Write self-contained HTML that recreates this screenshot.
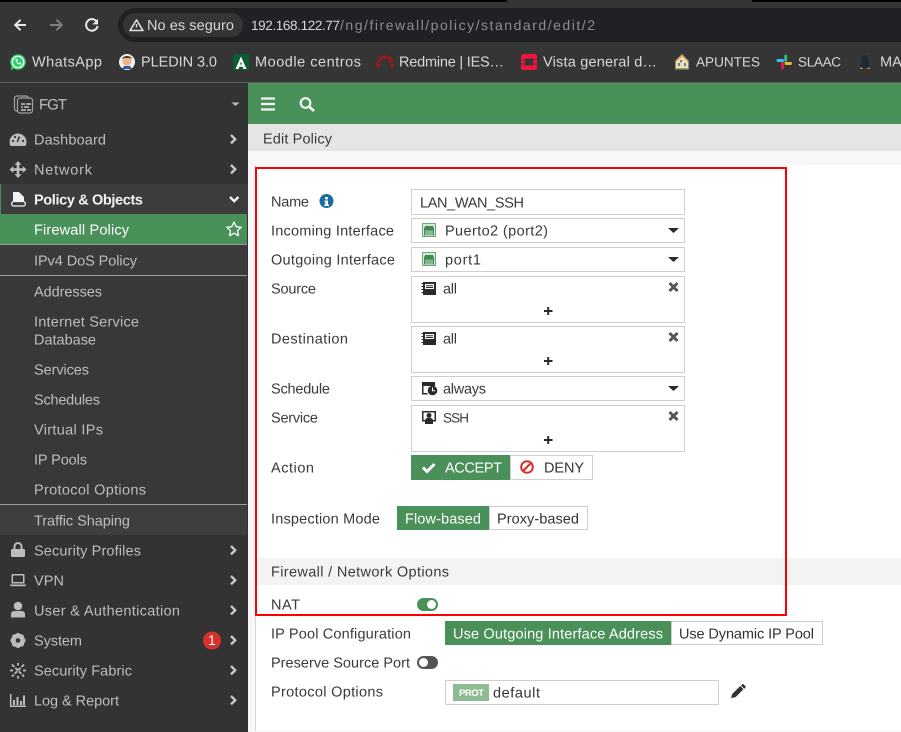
<!DOCTYPE html>
<html lang="es"><head><meta charset="utf-8"><title>Edit Policy</title>
<style>
html,body{margin:0;padding:0;background:#f5f5f5;width:901px;height:732px;overflow:hidden}
svg{display:block;position:absolute;left:0;top:0}
text{font-family:"Liberation Sans",sans-serif;font-size:14.5px;fill:#333;text-rendering:geometricPrecision;transform:translateY(-.7px)}
.c text{fill:#d8d8d8}
.n text{fill:#bdbdbd}
.l text{fill:#3a3a3a}
.b{fill:#fff;stroke:#cfcfcf;stroke-width:1}
</style></head><body>
<svg width="901" height="732" viewBox="0 0 901 732" xmlns="http://www.w3.org/2000/svg">
<!-- browser chrome -->
<rect width="901" height="83" fill="#353535"/>
<rect width="507" height="2" fill="#000"/><rect x="752" width="149" height="2" fill="#000"/>
<rect y="82" width="901" height="1" fill="#5c5c5c"/>
<rect x="118" y="8" width="800" height="34" rx="17" fill="#202124"/>
<rect x="123" y="13" width="120" height="24" rx="12" fill="#353535"/>
<g fill="none" stroke-width="2">
<path d="M26 25H15.5M20.5 19.8L15.2 25l5.3 5.2" stroke="#e8e8e8"/>
<path d="M50 25h11M56.500 19.800L61.800 25l-5.300 5.200" stroke="#7f7f7f"/>
<path d="M96.600 21.500A5.800 5.800 0 1 0 97.600 26" stroke="#e8e8e8"/>
<path d="M136.500 20L143 30.500H130Z" stroke="#e0e0e0" stroke-width="1.600" stroke-linejoin="round"/>
</g>
<path d="M98 18.800v5.600h-5.600z" fill="#e8e8e8"/>
<rect x="135.800" y="24" width="1.400" height="3.400" fill="#e0e0e0"/>
<g class="c">
<text x="147" y="30.700" textLength="87">No es seguro</text>
<text x="251" y="30.700" textLength="89" style="font-size:13.500px">192.168.122.77</text>
<text x="340" y="30.700" textLength="255" style="fill:#8e8e8e;font-size:14px">/ng/firewall/policy/standard/edit/2</text>
<text x="32" y="67" textLength="70">WhatsApp</text>
<text x="141" y="67" textLength="76">PLEDIN 3.0</text>
<text x="255" y="67" textLength="106">Moodle centros</text>
<text x="399" y="67" textLength="105">Redmine | IES…</text>
<text x="543" y="67" textLength="114">Vista general d…</text>
<text x="696" y="67" textLength="64" style="font-size:13.500px">APUNTES</text>
<text x="798" y="67" textLength="43" style="font-size:13.500px">SLAAC</text>
<text x="880" y="67">MA</text>
</g>
<!-- bookmark icons -->
<circle cx="18" cy="62" r="7.800" fill="#25d366"/><path d="M10.500 70l1.400-5 3.400 3.300z" fill="#25d366"/>
<circle cx="18" cy="62" r="5.700" fill="none" stroke="#fff" stroke-width="1.400"/><path d="M15.600 59.300c0 3 2 5.200 5 5.500l.7-1.700-1.700-.8-.8.800c-.8-.4-1.400-1-1.800-1.900l.8-.8-.7-1.800z" fill="#fff"/>
<circle cx="127" cy="62" r="8" fill="#f1f1f1"/><circle cx="127" cy="61" r="4.600" fill="#e9b48e"/><path d="M122 59c1-4 9-4 10 0l-2-1h-6z" fill="#5a3b26"/><path d="M122 69l2-3h6l2 3z" fill="#3559a5"/>
<rect x="233" y="54" width="16" height="16" fill="#0b5c33"/><path d="M241 56.500L235.500 69h3l.8-2.200h3.400l.8 2.200h3zM241 61.500l1 3h-2z" fill="#fff" fill-rule="evenodd"/>
<g fill="#b51010"><circle cx="378" cy="65.500" r="1.700"/><circle cx="379" cy="61" r="1.700"/><circle cx="381.500" cy="58" r="1.700"/><circle cx="385.200" cy="57" r="1.700"/><circle cx="389" cy="58" r="1.700"/><circle cx="391.400" cy="61" r="1.700"/><circle cx="392.400" cy="65.500" r="1.700"/></g>
<path d="M521 56.500q0-2.500 2.500-2.500h11q2.500 0 2.500 2.500v11q0 2.500-2.500 2.500h-11q-2.500 0-2.500-2.500zM525 58.500v7h8v-7z" fill="#f0163f" fill-rule="evenodd"/><path d="M521 60h4M533 60h4M521 64h4M533 64h4" stroke="#353535" stroke-width=".8"/>
<path d="M682 55l6.500 6.500V69h-13v-7.500z" fill="#f3dfae"/><path d="M682 54l7 7-1 1-6-5.500-6 5.500-1-1z" fill="#c9a76c"/><rect x="675" y="68" width="14" height="1.500" fill="#8aa86b"/><rect x="680" y="60" width="2" height="2.500" fill="#5b84b5"/><rect x="684" y="63" width="2" height="3" fill="#5b84b5"/><rect x="678" y="63" width="2" height="3" fill="#5b84b5"/>
<g stroke-width="3" stroke-linecap="round"><path d="M778 60.500h4.500" stroke="#36c5f0"/><path d="M785.700 56v4.500" stroke="#2eb67d"/><path d="M790.500 63.500H786" stroke="#ecb22e"/><path d="M782.500 68v-4.500" stroke="#e01e5a"/></g>
<path d="M865 55c-3 0-3.500 3-3.500 5 0 3-1.500 4-1.500 6l2 2h6l2-2c0-2-1.500-3-1.500-6 0-2-.5-5-3.500-5z" fill="#1c2a36"/><path d="M861 67l2 2h-3zM869 67l-2 2h3z" fill="#d8982c"/>

<!-- sidebar -->
<rect y="83" width="248" height="649" fill="#333"/>
<rect y="184" width="248" height="30" fill="#3c3c3c"/><rect y="184" width="1" height="30" fill="#4a9059"/>
<rect y="214" width="247" height="30" fill="#4a9059"/>
<rect y="244" width="247" height="1" fill="#9a9a9a"/>
<rect y="245" width="247" height="30" fill="#3a3a3a"/>
<rect y="275" width="247" height="1" fill="#9a9a9a"/>
<rect y="276" width="247" height="228" fill="#383838"/>
<rect y="504" width="247" height="1" fill="#9a9a9a"/>
<rect y="505" width="247" height="30" fill="#3e3e3e"/>
<g class="n">
<text x="39" y="110" textLength="28" style="font-size:15px">FGT</text>
<text x="34" y="145" textLength="72">Dashboard</text>
<text x="34" y="175" textLength="58">Network</text>
<text x="34" y="205" textLength="109" style="fill:#f2f2f2;font-weight:700">Policy &amp; Objects</text>
<text x="34" y="235" textLength="95" style="fill:#fff">Firewall Policy</text>
<text x="34" y="266" textLength="103">IPv4 DoS Policy</text>
<text x="34" y="297" textLength="68">Addresses</text>
<text x="34" y="327" textLength="105">Internet Service</text>
<text x="34" y="345" textLength="62">Database</text>
<text x="34" y="375" textLength="55">Services</text>
<text x="34" y="405" textLength="66">Schedules</text>
<text x="34" y="435" textLength="69">Virtual IPs</text>
<text x="34" y="465" textLength="53">IP Pools</text>
<text x="34" y="495" textLength="112">Protocol Options</text>
<text x="34" y="526" textLength="96">Traffic Shaping</text>
<text x="34" y="556" textLength="107">Security Profiles</text>
<text x="34" y="586" textLength="30">VPN</text>
<text x="34" y="616" textLength="146">User &amp; Authentication</text>
<text x="34" y="646" textLength="48">System</text>
<text x="34" y="676" textLength="98">Security Fabric</text>
<text x="34" y="706" textLength="85">Log &amp; Report</text>
</g>
<!-- FGT icon -->
<g fill="none" stroke="#a0a0a0" stroke-width="1.200"><rect x="14.500" y="96" width="14" height="15" rx="2.500"/><rect x="17.500" y="98" width="15" height="15" rx="2.500" fill="#333"/></g>
<path d="M21 103h4v2h-4zM26 103h5v2h-5zM21 106h2v2h-2zM24 106h5v2h-5zM21 109h5v2h-5zM27 109h4v2h-4z" fill="#a0a0a0"/>
<path d="M231.500 102.500h8l-4 3.500z" fill="#bbb"/>
<!-- chevrons -->
<g fill="none" stroke="#c8c8c8" stroke-width="2.400">
<path d="M231 135l4.200 4.200-4.200 4.200M231 165l4.200 4.200-4.200 4.200M231 546l4.200 4.200-4.200 4.200M231 576l4.200 4.200-4.200 4.200M231 606l4.200 4.200-4.200 4.200M231 636l4.200 4.200-4.200 4.200M231 666l4.200 4.200-4.200 4.200M231 696l4.200 4.200-4.200 4.200"/>
<path d="M230 197l4.200 4.200 4.200-4.200" stroke="#f2f2f2"/>
</g>
<!-- sidebar icons -->
<path d="M10.500 146a8.500 8.500 0 1 1 15 0z" fill="#bdbdbd"/><path d="M17.300 142l2-5.500" stroke="#333" stroke-width="1.500"/><circle cx="13" cy="141" r="1.100" fill="#333"/><circle cx="15" cy="137" r="1.100" fill="#333"/><circle cx="23" cy="141" r="1.100" fill="#333"/>
<path d="M18 163v13M11.500 169.500h13" stroke="#bdbdbd" stroke-width="2.600"/><path d="M18 161l3.500 3.800h-7zM18 178l3.500-3.800h-7zM9.500 169.500l3.800-3.500v7zM26.500 169.500l-3.800-3.500v7z" fill="#bdbdbd"/>
<path d="M13 192h6l5 5v5H13z" fill="#f2f2f2"/><rect x="11.700" y="201.500" width="13.600" height="4.500" rx="2" fill="#3c3c3c" stroke="#f2f2f2" stroke-width="1.300"/>
<path d="M234 222l2.200 4.700 5 .6-3.700 3.400 1 5-4.500-2.500-4.500 2.500 1-5-3.700-3.400 5-.6z" fill="none" stroke="#fff" stroke-width="1.300" stroke-linejoin="round"/>
<path d="M13.500 549v-2.500a4.500 4.500 0 0 1 9 0v2.500h1.500q1 0 1 1v5.500q0 1.500-1.500 1.500h-11q-1.500 0-1.500-1.500V550q0-1 1-1zM15.500 549h5v-2.500a2.500 2.500 0 0 0-5 0z" fill="#bdbdbd" fill-rule="evenodd"/>
<path d="M12.500 574h11q1 0 1 1v8.500h-13V575q0-1 1-1zM13 575.500v6.500h10v-6.500zM10 584.500h16q0 1.800-2 1.800H12q-2 0-2-1.800z" fill="#bdbdbd" fill-rule="evenodd"/>
<circle cx="18" cy="606" r="4.300" fill="#bdbdbd"/><path d="M11 617.500v-3q0-3.500 3.500-3.500h7q3.500 0 3.500 3.500v3z" fill="#bdbdbd"/>
<circle cx="18" cy="640.500" r="5.200" fill="none" stroke="#bdbdbd" stroke-width="3.500"/><path d="M18 633v15M10.500 640.500h15M12.700 635.200l10.600 10.600M23.300 635.200l-10.600 10.600" stroke="#bdbdbd" stroke-width="2.400"/><circle cx="18" cy="640.500" r="2.300" fill="#333"/>
<path d="M12 664.500l12 12M24 664.500l-12 12M18 663v2.500M18 676v2.500M10 670.500h3M23 670.500h3" stroke="#bdbdbd" stroke-width="1.800" stroke-dasharray="3.500 1.300" fill="none"/>
<path d="M10.700 694v12.300H26" fill="none" stroke="#bdbdbd" stroke-width="1.500"/><path d="M13 700h2v5h-2zM16.500 697h2v8h-2zM20 701h2v4h-2zM23 695.500h2v9.500h-2z" fill="#bdbdbd"/>
<circle cx="212" cy="640.500" r="9" fill="#d8302a"/><text x="208" y="645.700" style="fill:#fff;font-size:14px">1</text>

<!-- header -->
<rect x="248" y="83" width="653" height="41" fill="#4a9059"/>
<rect x="248" y="124" width="653" height="27" fill="#e5e5e5"/>
<rect x="248" y="151" width="653" height="581" fill="#f7f7f7"/>
<path d="M261 98.500h14M261 104h14M261 109.500h14" stroke="#f4f4f4" stroke-width="2.300"/>
<circle cx="305.500" cy="103" r="4.800" fill="none" stroke="#f4f4f4" stroke-width="2.200"/><path d="M309 106.500l5 4.500" stroke="#f4f4f4" stroke-width="2.800"/>
<text x="263" y="144" textLength="69" style="fill:#3a3a3a">Edit Policy</text>

<!-- panel -->
<rect x="255" y="165" width="646" height="566" fill="#fff"/>
<rect x="255" y="165" width="1" height="566" fill="#d8d8d8"/>
<rect x="256" y="558" width="645" height="27" fill="#f3f3f3"/>
<g class="l">
<text x="271" y="207" textLength="38">Name</text>
<text x="271" y="236" textLength="123">Incoming Interface</text>
<text x="271" y="265" textLength="124">Outgoing Interface</text>
<text x="271" y="294" textLength="45">Source</text>
<text x="271" y="344" textLength="77">Destination</text>
<text x="271" y="394" textLength="59">Schedule</text>
<text x="271" y="423" textLength="47">Service</text>
<text x="271" y="473" textLength="43">Action</text>
<text x="271" y="524" textLength="109">Inspection Mode</text>
<text x="271" y="577" textLength="178">Firewall / Network Options</text>
<text x="271" y="610" textLength="29">NAT</text>
<text x="271" y="639" textLength="140">IP Pool Configuration</text>
<text x="271" y="668" textLength="139">Preserve Source Port</text>
<text x="271" y="697" textLength="112">Protocol Options</text>
</g>
<circle cx="326.500" cy="201" r="7" fill="#1a6ea0"/><path d="M325 197h3v2.400h-3zM324.500 200.500h3.500v4h1v1.500h-4.700v-1.500h1v-2.500h-.8z" fill="#fff"/>
<!-- fields -->
<rect class="b" x="411.500" y="189.500" width="273" height="25"/>
<rect class="b" x="411.500" y="218.500" width="273" height="24"/>
<rect class="b" x="411.500" y="247.500" width="273" height="24"/>
<rect class="b" x="411.500" y="276.500" width="273" height="46"/>
<rect class="b" x="411.500" y="326.500" width="273" height="46"/>
<rect class="b" x="411.500" y="376.500" width="273" height="24"/>
<rect class="b" x="411.500" y="405.500" width="273" height="46"/>
<g class="l">
<text x="420" y="208" textLength="104">LAN_WAN_SSH</text>
<text x="445" y="236" textLength="103">Puerto2 (port2)</text>
<text x="445" y="265" textLength="36">port1</text>
<text x="443" y="294" textLength="14">all</text>
<text x="443" y="344" textLength="14">all</text>
<text x="443" y="394" textLength="43">always</text>
<text x="443" y="423" textLength="26" style="font-size:13.500px">SSH</text>
</g>
<!-- port icons -->
<g>
<rect x="422.500" y="223.500" width="13" height="13" fill="#d5e7d8" stroke="#6ea97c"/><path d="M425 226h8v1.500h1v8h-10v-8h1z" fill="#3f8a50"/><path d="M426 230.500v5M428 230.500v5M430 230.500v5M432 230.500v5" stroke="#e2efe4" stroke-width=".9"/>
<rect x="422.500" y="252.500" width="13" height="13" fill="#d5e7d8" stroke="#6ea97c"/><path d="M425 255h8v1.500h1v8h-10v-8h1z" fill="#3f8a50"/><path d="M426 259.500v5M428 259.500v5M430 259.500v5M432 259.500v5" stroke="#e2efe4" stroke-width=".9"/>
</g>
<!-- address book icons -->
<g fill="#2a2a2a">
<path d="M423 282h13v13h-13zM425 284v5h9v-5z" fill-rule="evenodd"/><path d="M426 285.200h7v1h-7zM426 287h7v1h-7z"/><path d="M421.500 283h2v1h-2zM421.500 286h2v1h-2zM421.500 289h2v1h-2zM421.500 292h2v1h-2z"/>
<path d="M423 332h13v13h-13zM425 334v5h9v-5z" fill-rule="evenodd"/><path d="M426 335.200h7v1h-7zM426 337h7v1h-7z"/><path d="M421.500 333h2v1h-2zM421.500 336h2v1h-2zM421.500 339h2v1h-2zM421.500 342h2v1h-2z"/>
</g>
<!-- schedule -->
<path d="M422 382h13v4h-11.500v7h4v1.500H422z" fill="#2a2a2a"/><circle cx="432.500" cy="390.500" r="4.800" fill="#2a2a2a"/><path d="M432.500 387.500v3.200h2.500" stroke="#fff" fill="none"/>
<!-- service -->
<path d="M422 411h14v10.500h-14zM423.500 412.500v7.500h11v-7.500z" fill="#2a2a2a" fill-rule="evenodd"/><circle cx="429" cy="415.500" r="2.500" fill="#2a2a2a"/><path d="M425 424v-3q0-3 2.500-3h3q2.500 0 2.500 3v3z" fill="#2a2a2a"/>
<!-- carets -->
<path d="M668 228h11l-5.500 5zM668 257h11l-5.500 5zM668 386h11l-5.500 5zM701 688h12l-6 5z" fill="#2a2a2a"/>
<!-- x + -->
<path d="M669.500 283l8 8M677.500 283l-8 8M669.500 333l8 8M677.500 333l-8 8M669.500 412l8 8M677.500 412l-8 8" stroke="#555" stroke-width="3"/>
<path d="M544 311h8.500M548.200 307v8M544 361h8.500M548.200 357v8M544 440h8.500M548.200 436v8" stroke="#2a2a2a" stroke-width="2"/>
<!-- action -->
<rect x="411" y="455" width="99" height="25" fill="#4a9059"/>
<rect class="b" x="510.500" y="455.500" width="82" height="24"/>
<path d="M423 467.500l4 4 7.500-7.500" fill="none" stroke="#fff" stroke-width="3"/>
<text x="445" y="473" textLength="57" style="fill:#fff">ACCEPT</text>
<circle cx="527" cy="467" r="5.800" fill="none" stroke="#d8302a" stroke-width="2"/><path d="M523 471l8-8" stroke="#d8302a" stroke-width="2"/>
<text x="544" y="473" textLength="40" style="fill:#333">DENY</text>
<!-- inspection -->
<rect x="397" y="506" width="92" height="24" fill="#4a9059"/>
<rect class="b" x="489.500" y="506.500" width="98" height="23"/>
<text x="405" y="524" textLength="76" style="fill:#fff">Flow-based</text>
<text x="497" y="524" textLength="82">Proxy-based</text>
<!-- toggles -->
<rect x="417" y="598" width="21" height="13" rx="6.500" fill="#4a9059"/><circle cx="431.500" cy="604.500" r="4.500" fill="#fff"/>
<rect x="417" y="656" width="21" height="13" rx="6.500" fill="#555"/><circle cx="423.500" cy="662.500" r="4.500" fill="#fff"/>
<!-- ip pool -->
<rect x="445" y="621" width="226" height="24" fill="#4a9059"/>
<rect class="b" x="671.500" y="621.500" width="151" height="23"/>
<text x="453" y="639" textLength="210" style="fill:#fff">Use Outgoing Interface Address</text>
<text x="679" y="639" textLength="135">Use Dynamic IP Pool</text>
<!-- protocol -->
<rect class="b" x="445.500" y="680.500" width="273" height="24"/>
<rect x="453" y="684" width="36" height="17" fill="#8fbb92"/>
<text x="459" y="696.700" textLength="25" style="fill:#fff;font-size:9.500px;font-weight:700">PROT</text>
<text x="493" y="698" textLength="47">default</text>
<path d="M731 698l1.200-4 8-8 3.300 3.300-8 8zM741 685.500l1.300-1.200q.6-.6 1.200 0l2 2q.6.600 0 1.200l-1.200 1.300z" fill="#333"/>
<!-- red highlight -->
<rect x="256" y="168" width="530" height="447" fill="none" stroke="#ff0000" stroke-width="2"/>
</svg>
</body></html>
